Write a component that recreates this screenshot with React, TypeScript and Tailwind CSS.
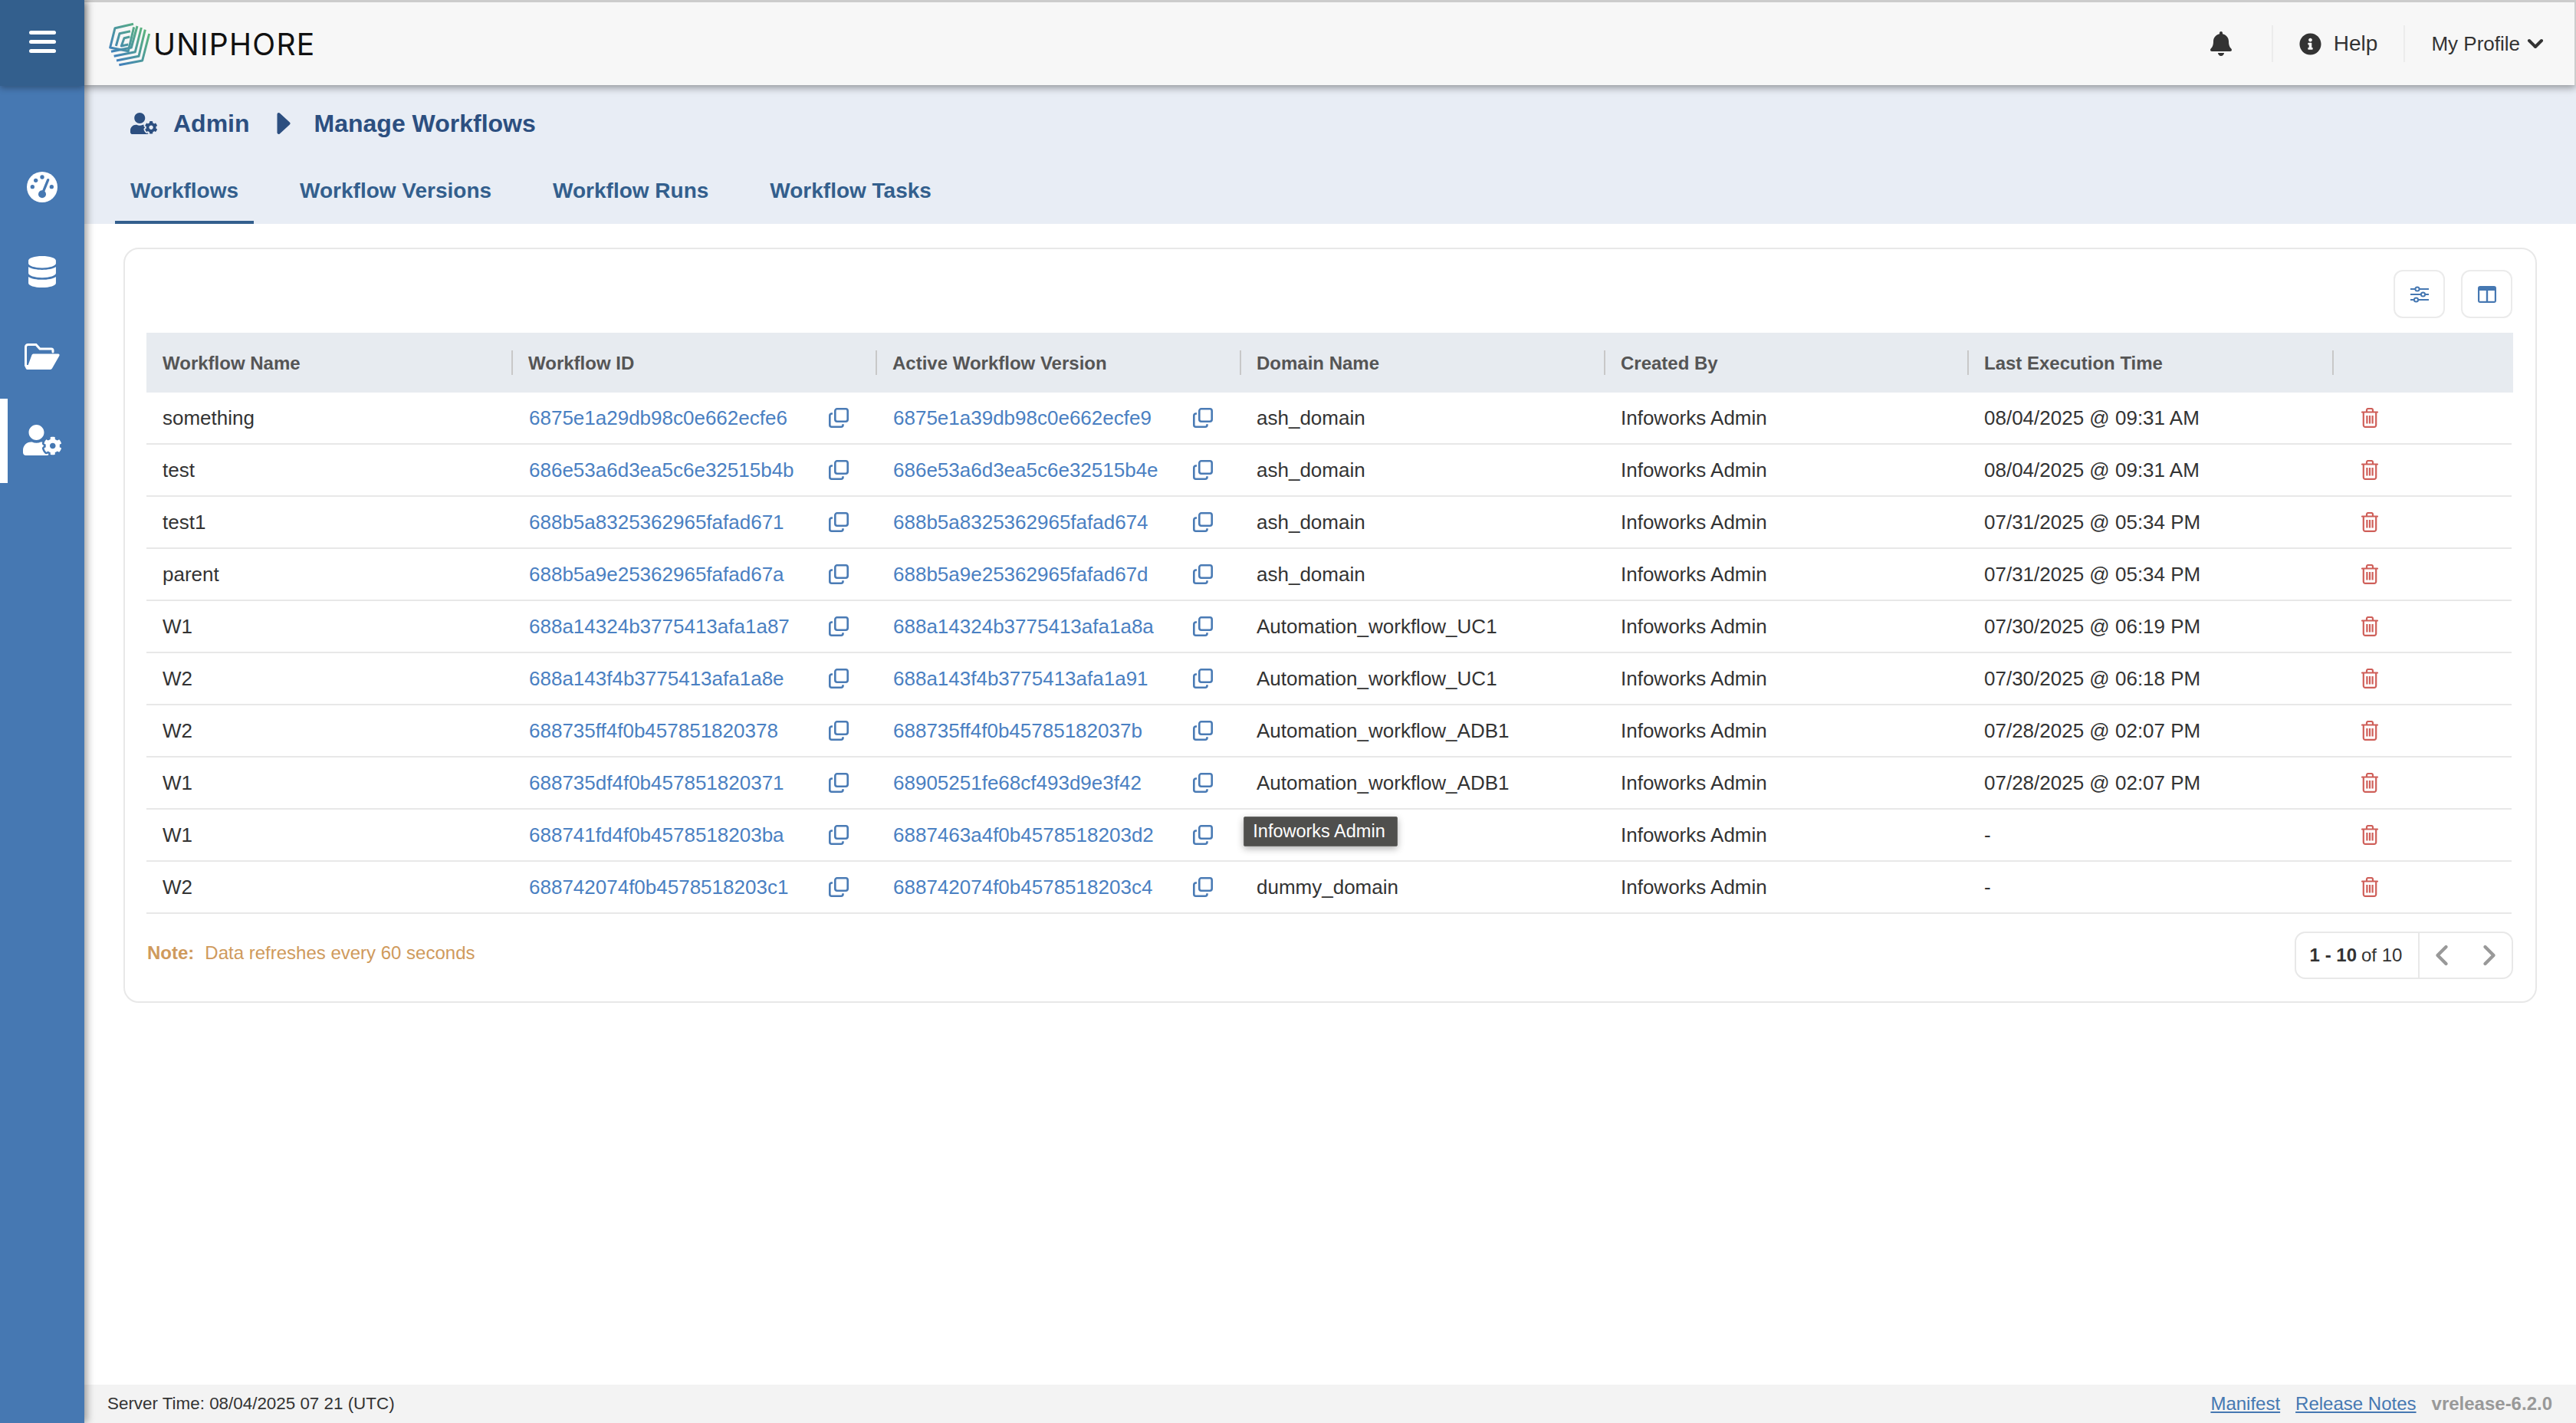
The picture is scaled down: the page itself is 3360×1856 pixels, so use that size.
import { ChevronDown, ChevronLeft, ChevronRight } from 'lucide-react';
import { FaBell, FaDatabase, FaInfoCircle, FaUserCog } from 'react-icons/fa';

const rows = [
  ['something', '6875e1a29db98c0e662ecfe6', '6875e1a39db98c0e662ecfe9', 'ash_domain', '08/04/2025 @ 09:31 AM'],
  ['test', '686e53a6d3ea5c6e32515b4b', '686e53a6d3ea5c6e32515b4e', 'ash_domain', '08/04/2025 @ 09:31 AM'],
  ['test1', '688b5a8325362965fafad671', '688b5a8325362965fafad674', 'ash_domain', '07/31/2025 @ 05:34 PM'],
  ['parent', '688b5a9e25362965fafad67a', '688b5a9e25362965fafad67d', 'ash_domain', '07/31/2025 @ 05:34 PM'],
  ['W1', '688a14324b3775413afa1a87', '688a14324b3775413afa1a8a', 'Automation_workflow_UC1', '07/30/2025 @ 06:19 PM'],
  ['W2', '688a143f4b3775413afa1a8e', '688a143f4b3775413afa1a91', 'Automation_workflow_UC1', '07/30/2025 @ 06:18 PM'],
  ['W2', '688735ff4f0b457851820378', '688735ff4f0b45785182037b', 'Automation_workflow_ADB1', '07/28/2025 @ 02:07 PM'],
  ['W1', '688735df4f0b457851820371', '68905251fe68cf493d9e3f42', 'Automation_workflow_ADB1', '07/28/2025 @ 02:07 PM'],
  ['W1', '688741fd4f0b4578518203ba', '6887463a4f0b4578518203d2', 'dummy_domain', '-'],
  ['W2', '688742074f0b4578518203c1', '688742074f0b4578518203c4', 'dummy_domain', '-'],
];

const headers = ['Workflow ID', 'Active Workflow Version', 'Domain Name', 'Created By', 'Last Execution Time'];

const tabs = ['Workflows', 'Workflow Versions', 'Workflow Runs', 'Workflow Tasks'];

const gridCols = 'grid grid-cols-[476px_475px_475px_475px_474px_476px_1fr]';

function Logo() {
  return (
    <svg viewBox="0 0 204 198" className="w-[68px] h-[66px]" fill="none" strokeWidth="9" strokeLinejoin="round" strokeLinecap="butt">
      <defs>
        <linearGradient id="uni" gradientUnits="userSpaceOnUse" x1="30" y1="170" x2="180" y2="50">
          <stop offset="0" stopColor="#3d78c4" />
          <stop offset="1" stopColor="#5cb67a" />
        </linearGradient>
      </defs>
      <g stroke="url(#uni)">
        <path d="M120 22L48 38L29 114L100 128L122 34" />
        <path d="M33 130L112 114L135 30" />
        <path d="M44 148L127 131L151 36" />
        <path d="M54 165L141 148L166 44" />
        <path d="M64 182L155 165L182 60" />
        <path d="M108 50L66 59L52 108" />
        <path d="M106 72L84 77L73 108L100 102" />
      </g>
    </svg>
  );
}

function GaugeIcon() {
  return (
    <svg viewBox="0 0 120 120" className="w-[40px] h-[40px]">
      <circle cx="60" cy="60" r="60" fill="#ffffff" />
      <g fill="#4678b2">
        <circle cx="35" cy="34" r="8" />
        <circle cx="60" cy="21" r="8" />
        <circle cx="22" cy="59" r="8" />
        <circle cx="97" cy="59" r="8" />
        <circle cx="60" cy="88" r="15" />
      </g>
      <path d="M60 88L83 32" stroke="#4678b2" strokeWidth="10" strokeLinecap="round" />
    </svg>
  );
}

function CopyIcon() {
  return (
    <svg viewBox="0 0 26 26" className="w-[26px] h-[26px] shrink-0" fill="none" stroke="#4a7bb5" strokeWidth="2.6">
      <rect x="8.3" y="1.3" width="16.4" height="16.4" rx="2.6" />
      <path d="M5 7.5H3.8A2.5 2.5 0 0 0 1.3 10v12.2a2.5 2.5 0 0 0 2.5 2.5H16a2.5 2.5 0 0 0 2.5-2.5v-1" />
    </svg>
  );
}

function TrashIcon() {
  return (
    <svg viewBox="0 0 22 26" className="w-[22px] h-[26px]" fill="none" stroke="#cf5f59" strokeWidth="2.2" strokeLinecap="round">
      <path d="M1 5.5h20" />
      <path d="M7 5V3a2 2 0 0 1 2-2h4a2 2 0 0 1 2 2v2" />
      <path d="M2.8 6v16.5a2.4 2.4 0 0 0 2.4 2.4h11.6a2.4 2.4 0 0 0 2.4-2.4V6" />
      <path d="M7.4 10v10.5M11 10v10.5M14.6 10v10.5" strokeLinecap="butt" />
    </svg>
  );
}

function FolderIcon() {
  return (
    <svg viewBox="0 0 46 36" className="w-[46px] h-[36px]" fill="#ffffff">
      <path d="M37 13V11a2 2 0 0 0-2-2H20l-5-5.5H4.5a3 3 0 0 0-3 3V31" fill="none" stroke="#ffffff" strokeWidth="3" strokeLinecap="round" />
      <path d="M11.5 15.5H44a1.6 1.6 0 0 1 1.4 2.4L36 34.6a2.6 2.6 0 0 1-2.3 1.4H2.5l7-19a2.2 2.2 0 0 1 2-1.5z" />
      <path d="M1 32a4 4 0 0 0 3 4h4V30H1z" />
    </svg>
  );
}

function SlidersIcon() {
  return (
    <svg viewBox="0 0 24 22" className="w-[24px] h-[22px]" fill="#ffffff" stroke="#4678b2" strokeWidth="2">
      <path d="M0 4h24M0 11h24M0 18h24" />
      <circle cx="9" cy="4" r="2.6" />
      <circle cx="16.5" cy="11" r="2.6" />
      <circle cx="7.5" cy="18" r="2.6" />
    </svg>
  );
}

function ColumnsIcon() {
  return (
    <svg viewBox="0 0 24 22" className="w-[24px] h-[22px]">
      <rect width="24" height="22" rx="3" fill="#4678b2" />
      <rect x="2.2" y="6" width="8.6" height="13.8" fill="#ffffff" />
      <rect x="13.2" y="6" width="8.6" height="13.8" fill="#ffffff" />
    </svg>
  );
}

export default function App() {
  return (
    <div className="flex h-screen overflow-hidden bg-white font-['Liberation_Sans',sans-serif] text-[#333333]">
      <aside className="relative z-20 w-[110px] shrink-0 bg-[#4678b2] shadow-[3px_0_10px_rgba(0,0,0,0.4)]">
        <div className="h-[112px] bg-[#335f8d] shadow-[0_3px_8px_rgba(0,0,0,0.3)] flex flex-col items-center justify-center gap-[7px] pb-[3px]">
          <span className="w-[35px] h-[5px] rounded-full bg-white" />
          <span className="w-[35px] h-[5px] rounded-full bg-white" />
          <span className="w-[35px] h-[5px] rounded-full bg-white" />
        </div>
        <nav className="flex flex-col text-white">
          <div className="h-[110px] mt-[78px] pb-[2px] flex items-center justify-center">
            <GaugeIcon />
          </div>
          <div className="h-[110px] pb-[2px] flex items-center justify-center">
            <FaDatabase className="w-[36px] h-[41px]" />
          </div>
          <div className="h-[110px] pb-[2px] flex items-center justify-center">
            <FolderIcon />
          </div>
          <div className="relative h-[110px] pb-[2px] flex items-center justify-center">
            <span className="absolute left-0 top-0 h-full w-[10px] bg-white" />
            <FaUserCog className="w-[50px] h-[40px]" />
          </div>
        </nav>
      </aside>

      <main className="flex-1 min-w-0 flex flex-col">
        <header className="relative z-10 h-[111px] shrink-0 flex items-center bg-[#f7f7f7] border-t-[3px] border-r-2 border-[#cccccc] shadow-[0_3px_10px_rgba(0,0,0,0.4)]">
          <div className="ml-[24px] flex items-center">
            <Logo />
            <span className="-ml-[2px] font-['Inter',sans-serif] text-[39px] leading-none tracking-[1.3px] text-[#111111]">UNIPHORE</span>
          </div>
          <div className="ml-auto flex items-center">
            <FaBell className="w-[30px] h-[32px] text-[#333333]" />
            <span className="ml-[51px] w-[2px] h-[48px] bg-[#ececec]" />
            <FaInfoCircle className="ml-[34px] w-[29px] h-[29px] text-[#333333]" />
            <span className="ml-[16px] text-[28px]">Help</span>
            <span className="ml-[34px] w-[2px] h-[48px] bg-[#ececec]" />
            <span className="ml-[34px] text-[26px]">My Profile</span>
            <ChevronDown className="ml-[4px] mr-[35px] w-[32px] h-[32px]" strokeWidth={3} />
          </div>
        </header>

        <section className="h-[181px] shrink-0 bg-[#e8edf5]">
          <div className="h-[101px] pl-[60px] pb-[2px] flex items-center font-bold text-[32px] text-[#2c4f80]">
            <FaUserCog className="w-[35px] h-[28px]" />
            <span className="ml-[21px]">Admin</span>
            <svg viewBox="0 0 18 30" className="ml-[35px] w-[18px] h-[30px]" fill="#2c4f80" stroke="#2c4f80" strokeWidth="4" strokeLinejoin="round">
              <path d="M2.5 3L15.5 15L2.5 27z" />
            </svg>
            <span className="ml-[31px]">Manage Workflows</span>
          </div>
          <div className="h-[80px] pl-[40px] flex gap-[40px] font-bold text-[28px] text-[#335f8d]">
            {tabs.map((tab, index) => (
              <div
                key={tab}
                className={`px-[20px] pb-[2px] flex items-center border-b-4 ${index === 0 ? 'border-[#335f8d]' : 'border-transparent'}`}
              >
                {tab}
              </div>
            ))}
          </div>
        </section>

        <section className="flex-1 min-h-0 px-[51px] pt-[31px]">
          <div className="relative border-2 border-[#e8e8e8] rounded-[20px] pl-[28px] pr-[29px] pt-[27px] pb-[29px]">
            <div className="flex justify-end gap-[21px] pr-[1px]">
              <button className="w-[67px] h-[63px] flex items-center justify-center border-2 border-[#ebebeb] rounded-[12px]">
                <SlidersIcon />
              </button>
              <button className="w-[67px] h-[63px] flex items-center justify-center border-2 border-[#ebebeb] rounded-[12px]">
                <ColumnsIcon />
              </button>
            </div>

            <div className={`${gridCols} mt-[19px] h-[78px] items-center bg-[#e7ebf0] text-[24px] font-bold text-[#555555]`}>
              <div className="pl-[21px] pt-[2px]">Workflow Name</div>
              {headers.map((h) => (
                <div key={h} className="h-[32px] pl-[20px] pt-[2px] flex items-center border-l-2 border-[#c8c8c8]">
                  {h}
                </div>
              ))}
              <div className="h-[32px] border-l-2 border-[#c8c8c8]" />
            </div>

            <div className="text-[26px]">
              {rows.map((row, i) => (
                <div key={i} className={`${gridCols} mr-[2px] h-[68px] items-center border-b-2 border-[#e8e8e8]`}>
                  <div className="pl-[21px]">{row[0]}</div>
                  <div className="pl-[23px] flex items-center">
                    <span className="w-[391px] text-[#4a80c2]">{row[1]}</span>
                    <CopyIcon />
                  </div>
                  <div className="pl-[23px] flex items-center">
                    <span className="w-[391px] text-[#4a80c2]">{row[2]}</span>
                    <CopyIcon />
                  </div>
                  <div className="pl-[22px]">{row[3]}</div>
                  <div className="pl-[22px]">Infoworks Admin</div>
                  <div className="pl-[22px]">{row[4]}</div>
                  <div className="pl-[38px] flex items-center">
                    <TrashIcon />
                  </div>
                </div>
              ))}
            </div>

            <div className="mt-[23px] flex items-center justify-between">
              <div className="mb-[7px] pl-[1px] text-[24px] text-[#cf9a5c]">
                <span className="font-bold">Note:</span>
                <span className="ml-[14px]">Data refreshes every 60 seconds</span>
              </div>
              <div className="w-[285px] h-[62px] flex items-center border-2 border-[#e8e8e8] rounded-[14px]">
                <div className="w-[161px] h-full pr-[3px] flex items-center justify-center border-r-2 border-[#e8e8e8] text-[24px]">
                  <span className="font-bold">1 - 10</span>
                  <span className="ml-[6px]">of 10</span>
                </div>
                <div className="flex-1 flex items-center justify-between px-[7px] text-[#999999]">
                  <ChevronLeft className="w-[44px] h-[44px]" strokeWidth={2.4} />
                  <ChevronRight className="w-[44px] h-[44px]" strokeWidth={2.4} />
                </div>
              </div>
            </div>

            <div className="absolute left-[1459px] top-[740px] w-[201px] h-[39px] pr-[4px] flex items-center justify-center bg-[#4f4f4d] border border-[#666664] rounded-[2px] text-[23.5px] text-white shadow-[0_3px_10px_rgba(0,0,0,0.3)]">
              Infoworks Admin
            </div>
          </div>
        </section>

        <footer className="h-[50px] shrink-0 flex items-center bg-[#f3f3f3] pl-[30px] pr-[31px] text-[24px]">
          <span className="text-[22.4px]">Server Time: 08/04/2025 07 21 (UTC)</span>
          <a className="ml-auto underline text-[#4678b2]">Manifest</a>
          <a className="ml-[20px] underline text-[#4678b2]">Release Notes</a>
          <span className="ml-[20px] font-bold text-[#999999]">vrelease-6.2.0</span>
        </footer>
      </main>
    </div>
  );
}
